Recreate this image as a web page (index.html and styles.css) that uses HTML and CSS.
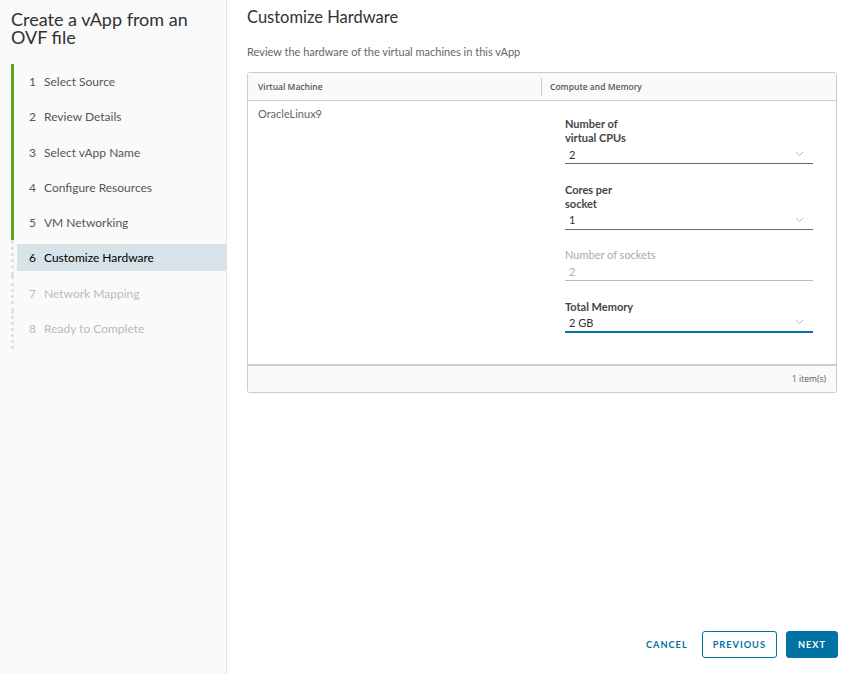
FILE: index.html
```html
<!DOCTYPE html>
<html lang="en">
<head>
    <meta charset="UTF-8">
    <meta name="viewport" content="width=device-width, initial-scale=1.0">
    <title>Create a vApp from an OVF file</title>
    <link rel="stylesheet" href="styles.css">
</head>
<body>
    <div class="wizard">
        <nav class="sidebar">
            <h1 class="wizard-title">Create a vApp from an OVF file</h1>
            <ol class="steps">
                <li class="step done"><div class="step-label"><span class="num">1</span>Select Source</div></li>
                <li class="step done"><div class="step-label"><span class="num">2</span>Review Details</div></li>
                <li class="step done"><div class="step-label"><span class="num">3</span>Select vApp Name</div></li>
                <li class="step done"><div class="step-label"><span class="num">4</span>Configure Resources</div></li>
                <li class="step done"><div class="step-label"><span class="num">5</span>VM Networking</div></li>
                <li class="step active"><div class="step-label"><span class="num">6</span>Customize Hardware</div></li>
                <li class="step todo"><div class="step-label"><span class="num">7</span>Network Mapping</div></li>
                <li class="step todo"><div class="step-label"><span class="num">8</span>Ready to Complete</div></li>
            </ol>
        </nav>

        <main class="content">
            <h2 class="page-title">Customize Hardware</h2>
            <p class="page-desc">Review the hardware of the virtual machines in this vApp</p>

            <div class="datagrid">
                <div class="grid-head">
                    <div class="col col-vm">Virtual Machine</div>
                    <div class="col col-hw">Compute and Memory</div>
                </div>
                <div class="grid-row">
                    <div class="cell cell-vm">OracleLinux9</div>
                    <div class="cell cell-hw">
                        <div class="field">
                            <label>Number of<br>virtual CPUs</label>
                            <div class="select">
                                <span>2</span>
                                <svg class="chev" width="9" height="6" viewBox="0 0 9 6"><path d="M1 1l3.5 3.5L8 1" fill="none" stroke="#b3b3b3" stroke-width="1"/></svg>
                            </div>
                        </div>
                        <div class="field">
                            <label>Cores per<br>socket</label>
                            <div class="select">
                                <span>1</span>
                                <svg class="chev" width="9" height="6" viewBox="0 0 9 6"><path d="M1 1l3.5 3.5L8 1" fill="none" stroke="#b3b3b3" stroke-width="1"/></svg>
                            </div>
                        </div>
                        <div class="field disabled">
                            <label>Number of sockets</label>
                            <div class="select">
                                <span>2</span>
                            </div>
                        </div>
                        <div class="field">
                            <label>Total Memory</label>
                            <div class="select focused">
                                <span>2 GB</span>
                                <svg class="chev" width="9" height="6" viewBox="0 0 9 6"><path d="M1 1l3.5 3.5L8 1" fill="none" stroke="#b3b3b3" stroke-width="1"/></svg>
                            </div>
                        </div>
                    </div>
                </div>
                <div class="grid-foot">1 item(s)</div>
            </div>

            <div class="actions">
                <button class="btn btn-link">Cancel</button>
                <button class="btn btn-outline">Previous</button>
                <button class="btn btn-primary">Next</button>
            </div>
        </main>
    </div>
</body>
</html>
```

FILE: styles.css
```css
body {
    margin: 0;
    font-family: Lato, "Open Sans", sans-serif;
    color: #313131;
    background-color: white;
}

.wizard {
    display: flex;
    height: 674px;
}

/* left side: title and step list */
.sidebar {
    width: 226px;
    flex-shrink: 0;
    background-color: #fafafa;
    border-right: 1px solid #e3e3e3;
}

.wizard-title {
    margin: 0;
    padding: 10px 11px 0 11px;
    font-size: 18px;
    line-height: 18px;
    font-weight: 400;
    color: #313131;
}

.steps {
    list-style: none;
    margin: 18px 0 0 11px;
    padding: 0 0 7px 0;
}

.step {
    padding: 4px 0 4.3px 0;
    border-left: 3px solid #62a420;
}

.step.active,
.step.todo {
    border-left: 3px dotted #e2e2e2;
}

.step.todo:last-child {
    padding-bottom: 7px;
}

.step-label {
    display: flex;
    align-items: center;
    height: 27px;
    margin-left: 3px;
    padding-left: 12px;
    font-size: 12px;
    color: #565656;
}

.num {
    width: 15px;
}

.step.active .step-label {
    background-color: #d8e3e9;
    color: #000;
}

.step.todo .step-label {
    color: #bbb;
}

/* main area */
.content {
    flex: 1;
    display: flex;
    flex-direction: column;
    padding: 7px 9px 16px 20px;
}

.page-title {
    margin: 0;
    font-size: 16.5px;
    line-height: 20px;
    font-weight: 400;
    color: #313131;
}

.page-desc {
    margin: 18px 0 13px 0;
    font-size: 11px;
    line-height: 14px;
    color: #666;
}

.datagrid {
    width: 588px;
    border: 1px solid #ccc;
    border-radius: 3px;
}

.grid-head {
    display: flex;
    height: 27px;
    background-color: #fafafa;
    border-bottom: 1px solid #ccc;
    font-family: "Open Sans", sans-serif;
    font-size: 8.5px;
    font-weight: 600;
    color: #565656;
}

.col {
    display: flex;
    align-items: center;
}

.col-vm {
    width: 283px;
    padding-left: 10px;
}

.col-hw {
    position: relative;
    padding-left: 9px;
}

.col-hw::before {
    content: "";
    position: absolute;
    left: 0;
    top: 5px;
    bottom: 4px;
    border-left: 1px solid #ccc;
}

.grid-row {
    display: flex;
    height: 263px;
    border-bottom: 2px solid #ccc;
}

.cell-vm {
    width: 283px;
    padding: 6px 0 0 10px;
    font-size: 11px;
    line-height: 14px;
    color: #666;
}

.cell-hw {
    padding: 16px 0 0 24px;
}

.field {
    margin-bottom: 18.5px;
}

.field label {
    display: block;
    font-size: 11px;
    line-height: 14px;
    font-weight: 700;
    color: #454545;
}

.select {
    display: flex;
    align-items: center;
    justify-content: space-between;
    box-sizing: border-box;
    width: 248px;
    height: 19px;
    padding: 0 9px 0 4px;
    border-bottom: 1px solid #666;
    font-size: 11px;
    color: #313131;
}

.select.focused {
    border-bottom: 2px solid #0072a3;
}

.field.disabled label,
.field.disabled .select {
    color: #aaa;
    font-weight: 400;
}

.field.disabled .select {
    border-bottom-color: #bbb;
}

.grid-foot {
    height: 26px;
    line-height: 26px;
    background-color: #fafafa;
    text-align: right;
    padding-right: 10px;
    font-family: "Open Sans", sans-serif;
    font-size: 8.5px;
    color: #565656;
}

/* bottom buttons */
.actions {
    margin-top: auto;
    display: flex;
    justify-content: flex-end;
    align-items: center;
    gap: 9px;
}

.btn {
    height: 27px;
    padding: 0 10px;
    border-radius: 3px;
    font-family: Lato, sans-serif;
    font-size: 9.2px;
    font-weight: 700;
    letter-spacing: 1px;
    text-transform: uppercase;
    cursor: pointer;
}

.btn-link {
    background: none;
    border: none;
    color: #0072a3;
    padding: 0 5px;
}

.btn-outline {
    background-color: white;
    border: 1px solid #0072a3;
    color: #0072a3;
}

.btn-primary {
    background-color: #0072a3;
    border: 1px solid #0072a3;
    color: white;
    padding: 0 11px;
}
```
